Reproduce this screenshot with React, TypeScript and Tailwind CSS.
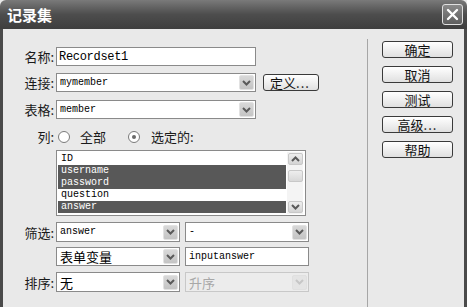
import React from "react";

const cjk = "font-['Noto_Sans_CJK_SC',sans-serif]";
const mono = "font-['Liberation_Mono',monospace]";

function Chevron({ up = false, disabled = false }: { up?: boolean; disabled?: boolean }) {
  return (
    <svg width="9" height="6" viewBox="0 0 9 6">
      <path
        d={up ? "M1 5 L4.5 1.5 L8 5" : "M1 1 L4.5 4.5 L8 1"}
        stroke={disabled ? "#c6c6c6" : "#5a5a5a"}
        strokeWidth="2"
        fill="none"
      />
    </svg>
  );
}

function DropBtn({ disabled = false }: { disabled?: boolean }) {
  return (
    <div
      className={`w-[15px] h-[15px] mr-px flex items-center justify-center rounded-[2px] border ${
        disabled ? "bg-[#e4e4e4] border-[#e0e0e0]" : "bg-gradient-to-b from-[#d8d8d8] to-[#c4c4c4] border-[#e2e2e2]"
      }`}
    >
      <Chevron disabled={disabled} />
    </div>
  );
}

function Label({ children }: { children: React.ReactNode }) {
  return (
    <div className={`w-[51px] mr-[2px] text-right text-[13px] leading-none text-[#1a1a1a] ${cjk}`}>{children}</div>
  );
}

function Btn({ children, className = "" }: { children: React.ReactNode; className?: string }) {
  return (
    <div
      className={`h-[17px] border border-[#3a3a3a] rounded-[3px] bg-gradient-to-b from-white to-[#e0e0e0] flex items-center justify-center text-[13px] leading-none text-[#111] ${cjk} ${className}`}
    >
      {children}
    </div>
  );
}

function Radio({ checked = false }: { checked?: boolean }) {
  return (
    <div className="w-[12px] h-[12px] rounded-full border border-[#7a7a7a] bg-white flex items-center justify-center">
      {checked && <div className="w-[4px] h-[4px] rounded-full bg-[#6a6a6a]" />}
    </div>
  );
}

const items = [
  { t: "ID", s: false },
  { t: "username", s: true },
  { t: "password", s: true },
  { t: "question", s: false },
  { t: "answer", s: true },
];

export default function App() {
  return (
    <div className={`w-[467px] h-[307px] flex flex-col bg-[#e9e9e9] overflow-hidden ${cjk}`}>
      {/* Title bar */}
      <div className="h-[29px] shrink-0 flex items-center justify-between pl-[7px] pr-[4px] rounded-t-[6px] bg-gradient-to-b from-[#7a7a7a] via-[#4d4d4d] to-[#3e3e3e]">
        <span className={`text-white font-bold text-[15px] leading-none ${cjk}`}>记录集</span>
        <div className="w-[21px] h-[21px] rounded-[3px] border border-[#e0e0e0] bg-gradient-to-b from-[#8a8a8a] to-[#5e5e5e] flex items-center justify-center">
          <svg width="13" height="13" viewBox="0 0 13 13">
            <path d="M2 2 L11 11 M11 2 L2 11" stroke="white" strokeWidth="2.4" strokeLinecap="round" />
          </svg>
        </div>
      </div>

      {/* Body */}
      <div className="flex-1 flex border-l-[3px] border-r-[3px] border-[#4a4a4a] bg-[#e9e9e9]">
        {/* Left form */}
        <div className="w-[364px] pt-[18px] flex flex-col">
          {/* Name */}
          <div className="flex items-center h-[19px]">
            <Label>名称:</Label>
            <div className="w-[200px] h-[19px] border border-[#8a8a8a] bg-white flex items-center pl-[2px]">
              <span className={`text-[12px] leading-none tracking-[-0.3px] text-black ${mono}`}>Recordset1</span>
            </div>
          </div>
          {/* Connection */}
          <div className="flex items-center h-[19px] mt-[7px]">
            <Label>连接:</Label>
            <div className="w-[200px] h-[19px] border border-[#8a8a8a] bg-white flex items-center">
              <span className={`flex-1 pl-[3px] text-[10px] leading-none text-black ${mono}`}>mymember</span>
              <DropBtn />
            </div>
            <Btn className="w-[56px] ml-[7px] justify-start pl-[6px]">
              定义<span className="tracking-[1px]">...</span>
            </Btn>
          </div>
          {/* Table */}
          <div className="flex items-center h-[19px] mt-[8px]">
            <Label>表格:</Label>
            <div className="w-[200px] h-[19px] border border-[#8a8a8a] bg-white flex items-center">
              <span className={`flex-1 pl-[3px] text-[10px] leading-none text-black ${mono}`}>member</span>
              <DropBtn />
            </div>
          </div>
          {/* Columns radio */}
          <div className="flex items-center h-[15px] mt-[10px]">
            <Label>列:</Label>
            <div className="ml-[2px]">
              <Radio />
            </div>
            <span className="ml-[10px] text-[13px] leading-none text-[#1a1a1a]">全部</span>
            <div className="ml-[22px]">
              <Radio checked />
            </div>
            <span className="ml-[11px] text-[13px] leading-none text-[#1a1a1a]">选定的:</span>
          </div>
          {/* List box */}
          <div className="flex mt-[6px]">
            <div className="w-[53px]" />
            <div className="w-[250px] h-[66px] border border-[#8a8a8a] bg-white flex p-px">
              <div className="flex-1 flex flex-col pt-px">
                {items.map((it) => (
                  <div
                    key={it.t}
                    className={`h-[12px] flex items-center pl-[3px] text-[10px] leading-none ${mono} ${
                      it.s ? "bg-[#585858] text-white" : "bg-white text-black"
                    }`}
                  >
                    {it.t}
                  </div>
                ))}
              </div>
              <div className="w-[16px] ml-px mr-[1px] flex flex-col items-center justify-between py-px bg-[#f4f4f4]">
                <div className="w-[15px] h-[12px] rounded-[2px] border border-[#c8c8c8] bg-gradient-to-b from-[#eeeeee] to-[#d4d4d4] flex items-center justify-center">
                  <Chevron up />
                </div>
                <div className="w-[15px] h-[12px] -mt-[14px] rounded-[2px] border border-[#c8c8c8] bg-gradient-to-b from-[#eeeeee] to-[#d8d8d8]" />
                <div className="w-[15px] h-[12px] rounded-[2px] border border-[#c8c8c8] bg-gradient-to-b from-[#eeeeee] to-[#d4d4d4] flex items-center justify-center">
                  <Chevron />
                </div>
              </div>
            </div>
          </div>
          {/* Filter row 1 */}
          <div className="flex items-center h-[20px] mt-[6px]">
            <Label>筛选:</Label>
            <div className="w-[124px] h-[20px] border border-[#8a8a8a] bg-white flex items-center">
              <span className={`flex-1 pl-[3px] text-[10px] leading-none text-black ${mono}`}>answer</span>
              <DropBtn />
            </div>
            <div className="w-[124px] h-[20px] ml-[5px] border border-[#8a8a8a] bg-white flex items-center">
              <span className={`flex-1 pl-[3px] text-[10px] leading-none text-black ${mono}`}>-</span>
              <DropBtn />
            </div>
          </div>
          {/* Filter row 2 */}
          <div className="flex items-center h-[19px] mt-[5px]">
            <div className="w-[53px]" />
            <div className="w-[124px] h-[19px] border border-[#8a8a8a] bg-white flex items-center">
              <span className="flex-1 pl-[3px] text-[13px] leading-none text-black">表单变量</span>
              <DropBtn />
            </div>
            <div className="w-[124px] h-[19px] ml-[5px] border border-[#8a8a8a] bg-white flex items-center">
              <span className={`flex-1 pl-[3px] text-[10px] leading-none text-black ${mono}`}>inputanswer</span>
            </div>
          </div>
          {/* Sort row */}
          <div className="flex items-center h-[20px] mt-[6px]">
            <Label>排序:</Label>
            <div className="w-[124px] h-[20px] border border-[#8a8a8a] bg-white flex items-center">
              <span className="flex-1 pl-[3px] text-[13px] leading-none text-black">无</span>
              <DropBtn />
            </div>
            <div className="w-[124px] h-[20px] ml-[5px] border border-[#c8c8c8] bg-[#ececec] flex items-center">
              <span className="flex-1 pl-[3px] text-[13px] leading-none text-[#a8a8a8]">升序</span>
              <DropBtn disabled />
            </div>
          </div>
        </div>

        {/* Separator */}
        <div className="w-px mt-[10px] bg-[#a6a6a6]" />

        {/* Right buttons */}
        <div className="flex-1 pt-[12px] pl-[14px] flex flex-col gap-[8px]">
          <Btn className="w-[71px]">确定</Btn>
          <Btn className="w-[71px]">取消</Btn>
          <Btn className="w-[71px]">测试</Btn>
          <Btn className="w-[71px]">
            高级<span className="tracking-[1px]">...</span>
          </Btn>
          <Btn className="w-[71px]">帮助</Btn>
        </div>
      </div>
    </div>
  );
}
